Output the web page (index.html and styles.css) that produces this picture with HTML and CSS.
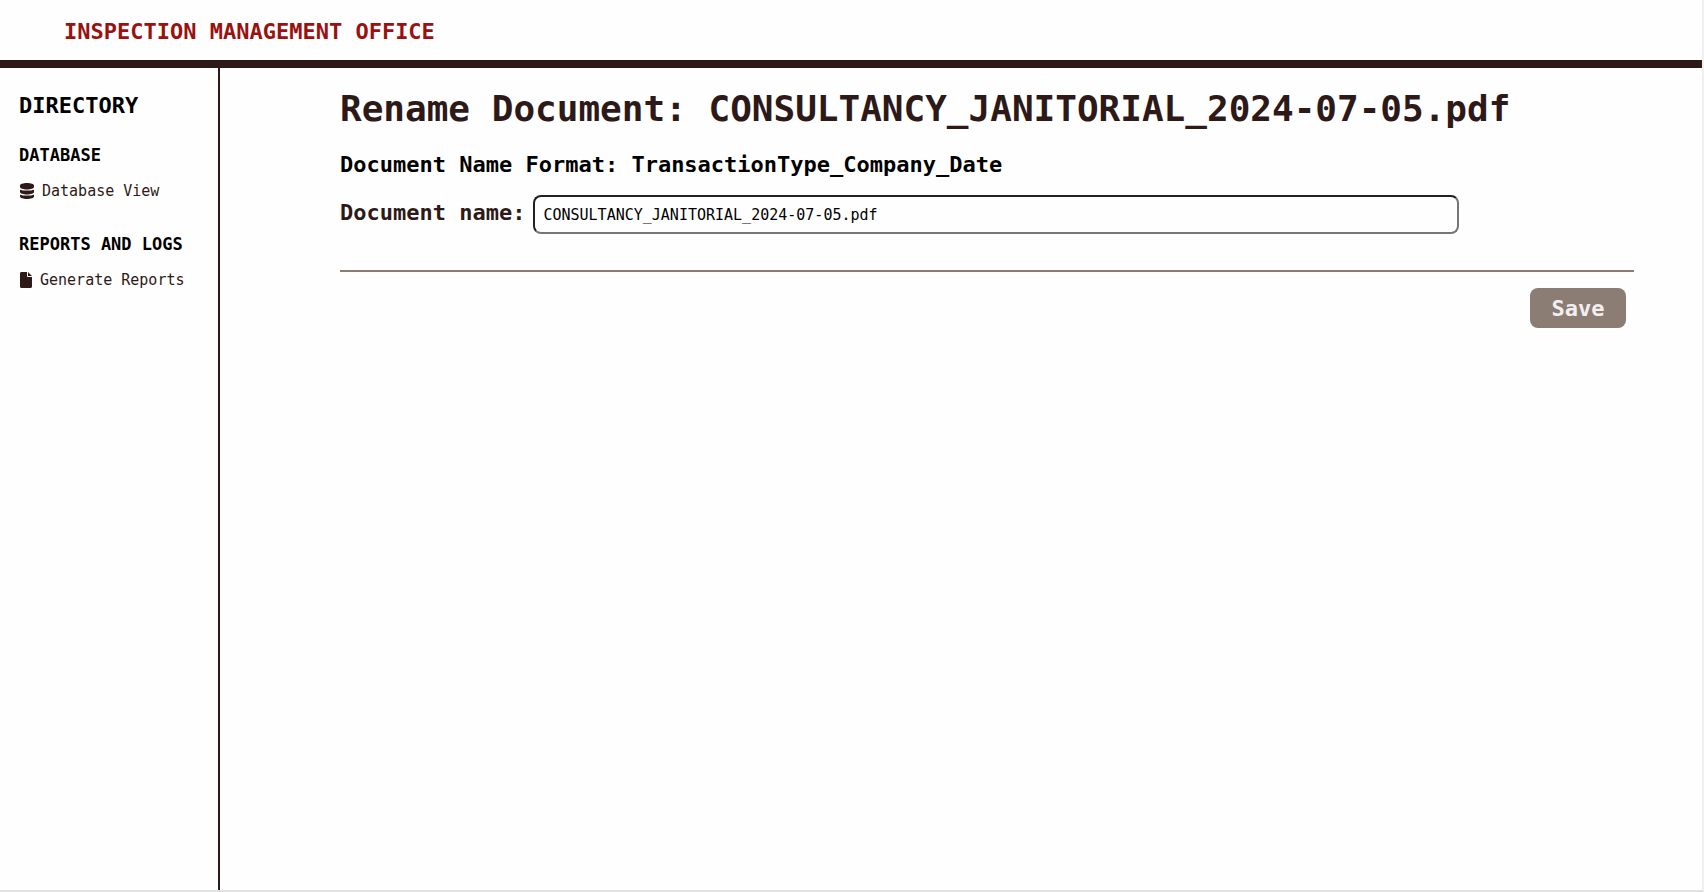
FILE: index.html
```html
<!DOCTYPE html>
<html lang="en">
<head>
<meta charset="utf-8">
<title>Rename Document</title>
<link rel="stylesheet" href="styles.css">
</head>
<body>
<div class="page">
  <header class="topbar"><span class="brand">INSPECTION MANAGEMENT OFFICE</span></header>
  <div class="shell">
    <nav class="sidebar" aria-label="Directory">
      <h2 class="sidebar-title">DIRECTORY</h2>
      <section class="group">
        <h3 class="group-title">DATABASE</h3>
        <a class="nav-link" href="#database">
          <svg width="14" height="16" viewBox="0 0 448 512" aria-hidden="true"><path fill="currentColor" d="M448 80v48c0 44-100 80-224 80S0 172 0 128V80C0 36 100 0 224 0s224 36 224 80zM448 214v74c0 44-100 80-224 80S0 332 0 288V214c40 18 130 28 224 28s184-10 224-28zM448 374v58c0 44-100 80-224 80S0 476 0 432V374c40 18 130 28 224 28s184-10 224-28z"/></svg>
          <span>Database View</span>
        </a>
      </section>
      <section class="group">
        <h3 class="group-title">REPORTS AND LOGS</h3>
        <a class="nav-link" href="#reports">
          <svg width="12" height="16" viewBox="0 0 384 512" aria-hidden="true"><path fill="currentColor" d="M0 48C0 20 20 0 48 0h176v128c0 18 14 32 32 32h128v304c0 28-20 48-48 48H48c-28 0-48-20-48-48zM384 128H256V0z"/></svg>
          <span>Generate Reports</span>
        </a>
      </section>
    </nav>
    <main class="content">
      <h1 class="title">Rename Document: CONSULTANCY_JANITORIAL_2024-07-05.pdf</h1>
      <p class="format">Document Name Format: TransactionType_Company_Date</p>
      <form class="form">
        <div class="field">
          <label class="label" for="docname">Document name:</label>
          <input class="input" id="docname" type="text" value="CONSULTANCY_JANITORIAL_2024-07-05.pdf">
        </div>
        <div class="actions"><button class="save" type="submit">Save</button></div>
      </form>
    </main>
  </div>
</div>
</body>
</html>
```
FILE: styles.css
```css
* { box-sizing: border-box; }
body {
  margin: 0;
  background: #fefefe;
  color: #000;
  font-family: "DejaVu Sans Mono", monospace;
}
.page {
  min-height: 100vh;
  display: flex;
  flex-direction: column;
  border-right: 2px solid #f0f0f0;
  border-bottom: 2px solid #e1e1e1;
}
.topbar {
  padding: 16px 64px 12px;
  border-bottom: 8px solid #2d1918;
}
.brand {
  display: block;
  color: #9a1111;
  font-size: 22px;
  font-weight: bold;
  line-height: 32px;
}
.shell { flex: 1; display: flex; }
.sidebar {
  flex: 0 0 220px;
  padding: 24px 16px 0 19px;
  border-right: 2px solid #2d1918;
}
.sidebar-title {
  margin: 0 0 21px;
  font-size: 22px;
  line-height: 28px;
}
.group { margin-bottom: 31px; }
.group-title {
  margin: 0 0 14px;
  font-size: 17px;
  line-height: 28px;
  white-space: nowrap;
}
.nav-link {
  display: flex;
  align-items: center;
  gap: 8px;
  padding-left: 1px;
  color: #2d1918;
  font-size: 15px;
  line-height: 16px;
  text-decoration: none;
  white-space: nowrap;
}
.content { flex: 1; min-width: 0; padding: 17px 68px 0 120px; }
.title {
  margin: 0;
  color: #2d1918;
  font-size: 36px;
  line-height: 48px;
}
.format {
  margin: 18px 0 16px;
  font-size: 22px;
  font-weight: bold;
  line-height: 28px;
}
.field {
  display: flex;
  align-items: flex-start;
  gap: 8px;
  padding: 0 175px 36px 0;
  border-bottom: 2px solid #8c7d74;
}
.label {
  color: #2d1918;
  font-size: 22px;
  font-weight: bold;
  line-height: 36px;
  white-space: nowrap;
}
.input {
  flex: 1;
  min-width: 0;
  height: 39px;
  padding: 0 8px;
  border: 2px solid;
  border-color: #212121 #767676 #767676 #212121;
  border-radius: 8px;
  background: #fefefe;
  color: #000;
  font-family: inherit;
  font-size: 15px;
}
.actions { display: flex; justify-content: flex-end; padding: 16px 8px; }
.save {
  width: 96px;
  height: 40px;
  padding: 0;
  border: 0;
  border-radius: 8px;
  background: #8c7d74;
  color: #f1efef;
  font-family: inherit;
  font-size: 22px;
  font-weight: bold;
}
```
